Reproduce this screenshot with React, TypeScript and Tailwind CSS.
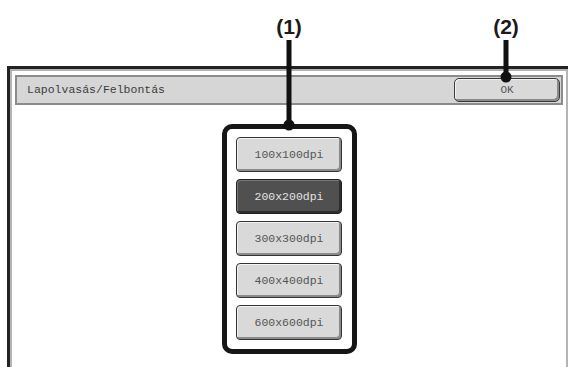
import React from 'react';

const resolutions = ['100x100dpi', '200x200dpi', '300x300dpi', '400x400dpi', '600x600dpi'];
const selected = '200x200dpi';

const Callout: React.FC<{ label: string; x: number; lineTop: number; lineBottom: number }> = ({ label, x, lineTop, lineBottom }) => (
  <>
    <span
      className="absolute top-[13px] w-[40px] -translate-x-1/2 text-center text-[21px] font-bold leading-[28px] text-[#1a1a1a]"
      style={{ left: x, fontFamily: '"Liberation Sans", Arial, sans-serif' }}
    >
      {label}
    </span>
    <span className="absolute w-[5px] -translate-x-1/2 bg-[#111]" style={{ left: x, top: lineTop, height: lineBottom - lineTop }} />
    <span
      className="absolute h-[11px] w-[11px] -translate-x-1/2 -translate-y-1/2 rounded-full bg-[#111]"
      style={{ left: x, top: lineBottom }}
    />
  </>
);

const App: React.FC = () => {
  return (
    <div
      className="relative h-[367px] w-[568px] overflow-hidden bg-white"
      style={{ fontFamily: '"Liberation Mono", "Courier New", monospace' }}
    >
      <div className="h-[66px]" />

      {/* Screen frame */}
      <div className="ml-[7px] h-[301px] border-l-[3px] border-t-[3px] border-[#232323]">
        <div className="h-full border-l-2 border-r-2 border-t-2 border-[#b4b4b4] pl-[3px] pr-[2px] pt-[4px]">
          {/* Title bar */}
          <div className="flex h-[30px] w-[548px] items-center justify-between border-2 border-[#8c8c8c] bg-[#d6d6d6] pr-[1px]">
            <span className="pl-[10px] text-[11.5px] text-[#3c3c3c]">Lapolvasás/Felbontás</span>
            <button className="flex h-[24px] w-[106px] items-center justify-center rounded-[5px] border border-[#3a3a3a] bg-[#d9d9d9] text-[11px] text-[#555] shadow-[inset_-2px_-2px_0_#8a8a8a,inset_1px_1px_0_#f2f2f2]">
              OK
            </button>
          </div>

          {/* Resolution options */}
          <div className="ml-[207px] mt-[19px] flex w-[135px] flex-col gap-[7px] rounded-[10px] border-[5px] border-[#161616] bg-white px-[9px] pb-[9px] pt-[8px]">
            {resolutions.map((r) => {
              const isSel = r === selected;
              return (
                <button
                  key={r}
                  className={
                    isSel
                      ? 'flex h-[35px] w-[106px] items-center justify-center rounded-[4px] border border-[#222] bg-[#505050] text-[11.5px] text-[#e2e2e2] shadow-[inset_-2px_-2px_0_#2e2e2e,inset_1px_1px_0_#777]'
                      : 'flex h-[35px] w-[106px] items-center justify-center rounded-[4px] border border-[#333] bg-[#d9d9d9] text-[11.5px] text-[#555] shadow-[inset_-2px_-2px_0_#8a8a8a,inset_1px_1px_0_#f4f4f4]'
                  }
                >
                  {r}
                </button>
              );
            })}
          </div>
        </div>
      </div>

      <Callout label="(1)" x={289} lineTop={40} lineBottom={125} />
      <Callout label="(2)" x={506} lineTop={40} lineBottom={77} />
    </div>
  );
};

export default App;
